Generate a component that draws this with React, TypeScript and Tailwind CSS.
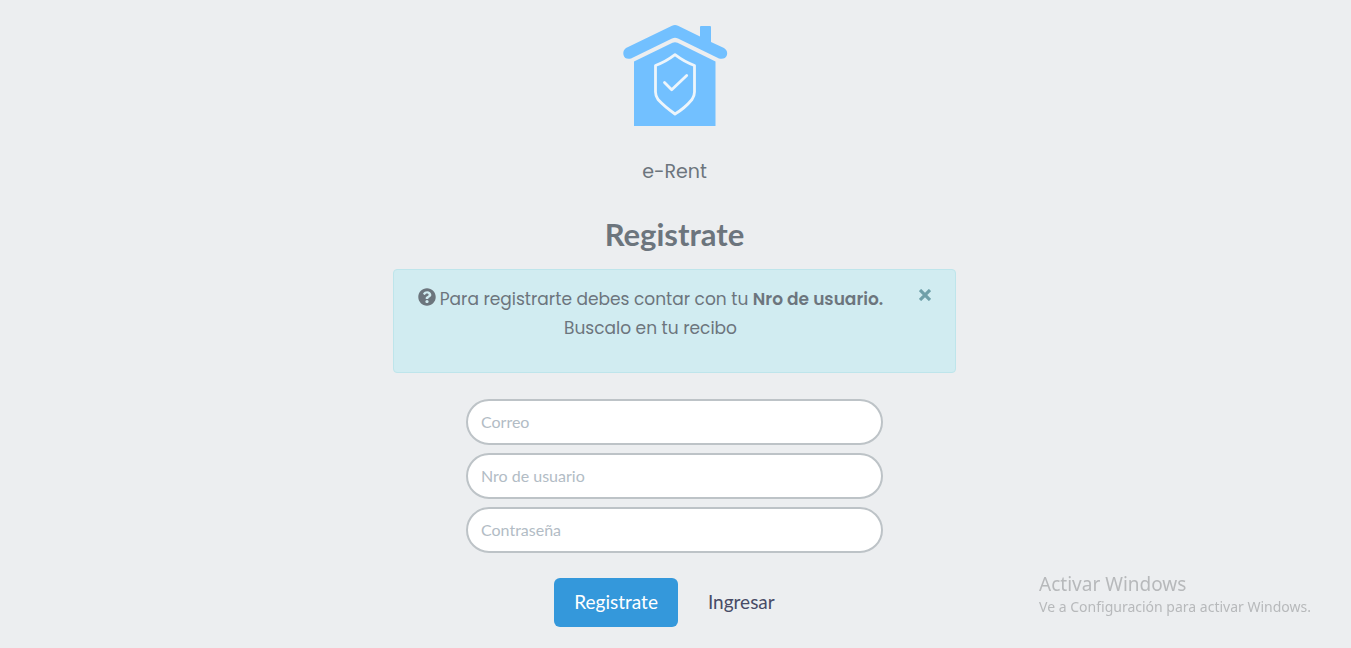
import { useState } from "react";

function HouseLogo() {
  return (
    <svg viewBox="0 0 106 104" className="ml-0.5 h-[104px] w-[106px]" role="img" aria-label="e-Rent">
      <g fill="#72c0ff">
        <path d="M53 1Q54.500 1 56 1.700L78 12.500V3Q78 2 79 2H88Q89 2 89 3V18L102 24Q106 26.500 105 31Q103 36 97 34.500L56 14.500Q53 13 50 14.500L9 34.500Q3 36 1.500 31Q0.500 26.500 4 24L50 1.700Q51.500 1 53 1Z" />
        <path d="M12 37.500L50.500 18.800Q53 17.600 55.500 18.800L93.500 37.500V102H12Z" />
      </g>
      <g fill="none" stroke="#edf5fb" strokeWidth="2.800" strokeLinejoin="round" strokeLinecap="round">
        <path d="M53 30.700Q62.500 38 72.500 41.500V68Q72.500 72 70 75.500Q63 84 53 90Q42.500 82.500 36 75.500Q33.500 72 33.500 68V41.500Q43.500 38 53 30.700Z" />
        <path d="M42.500 58.500L49.700 65.800L64.700 51.500" />
      </g>
    </svg>
  );
}

function QuestionIcon() {
  return (
    <svg viewBox="0 0 512 512" className="mr-1 inline-block size-[18px] -translate-y-px align-[-2px]" fill="currentColor" aria-hidden="true">
      <path d="M504 256c0 136.997-111.043 248-248 248S8 392.997 8 256C8 119.083 119.043 8 256 8s248 111.083 248 248zM262.655 90c-54.497 0-89.255 22.957-116.549 63.758-3.536 5.286-2.353 12.415 2.715 16.258l34.699 26.310c5.205 3.947 12.621 3.008 16.665-2.122 17.864-22.658 30.113-35.797 57.303-35.797 20.429 0 45.698 13.148 45.698 32.958 0 14.976-12.363 22.667-32.534 33.976C247.128 238.528 216 254.941 216 296v4c0 6.627 5.373 12 12 12h56c6.627 0 12-5.373 12-12v-1.333c0-28.462 83.186-29.647 83.186-106.667 0-58.002-60.165-102-116.531-102zM256 338c-25.365 0-46 20.635-46 46 0 25.364 20.635 46 46 46s46-20.636 46-46c0-25.365-20.635-46-46-46z" />
    </svg>
  );
}

const fields = [
  { id: "correo", label: "Correo", type: "email" },
  { id: "usuario", label: "Nro de usuario", type: "text" },
  { id: "clave", label: "Contraseña", type: "password" },
];

export default function App() {
  const [showNotice, setShowNotice] = useState(true);

  return (
    <div className="min-h-screen bg-[#eceef0] pr-0.5 font-['Lato',sans-serif] text-[#6c757d]">
      <main className="mx-auto flex w-full max-w-xl flex-col items-center px-1.5 pt-6 pb-5 md:w-5/12 md:px-0">
        <HouseLogo />
        <p className="mt-7 font-['Poppins','Inter',sans-serif] text-[19px] leading-8">e-Rent</p>
        <h1 className="mt-[26px] text-[31px] leading-10 font-bold">Registrate</h1>

        {showNotice && (
          <div
            role="alert"
            className="mt-[15px] flex min-h-[104px] w-full items-start rounded border border-[#bee5eb] bg-[#d1ecf1] pt-[15px] pr-3 pl-5"
          >
            <p className="flex-1 text-center font-['Poppins','Inter',sans-serif] text-[17px] leading-[29px]">
              <QuestionIcon />
              Para registrarte debes contar con tu <strong className="font-semibold">Nro de usuario.</strong>
              <br />
              Buscalo en tu recibo
            </p>
            <button
              type="button"
              aria-label="Cerrar"
              onClick={() => setShowNotice(false)}
              className="ml-5 flex h-5 w-9 items-center justify-center text-[#6fa0a9]"
            >
              <svg viewBox="0 0 12 12" className="size-3" fill="none" stroke="currentColor" strokeWidth="3.200" aria-hidden="true">
                <path d="M1 1L11 11M11 1L1 11" />
              </svg>
            </button>
          </div>
        )}

        <form className="mt-[26px] flex w-full flex-col items-center" onSubmit={(e) => e.preventDefault()}>
          <div className="flex w-full max-w-[417px] flex-col gap-2">
            {fields.map((f) => (
              <input
                key={f.id}
                id={f.id}
                name={f.id}
                type={f.type}
                aria-label={f.label}
                placeholder={f.label}
                className="h-[46px] w-full rounded-full border-2 border-[#bdc3c7] bg-white px-[13px] pb-0.5 text-base text-[#34495e] outline-none placeholder:text-[#b2bcc5] focus:border-[#3498db]"
              />
            ))}
          </div>
          <div className="mt-[25px] ml-2.5 flex items-center text-[19px]">
            <button type="submit" className="h-[49px] rounded-md bg-[#3498db] px-5 text-white">
              Registrate
            </button>
            <a href="#ingresar" className="px-[30px] text-[#484b66]">
              Ingresar
            </a>
          </div>
        </form>
      </main>

      <aside className="pointer-events-none fixed right-10 bottom-[30px] font-['Segoe_UI','Noto_Sans',sans-serif] text-[#b7b9bb]">
        <p className="text-[19px] leading-6">Activar Windows</p>
        <p className="text-sm leading-[22px]">Ve a Configuración para activar Windows.</p>
      </aside>
    </div>
  );
}
